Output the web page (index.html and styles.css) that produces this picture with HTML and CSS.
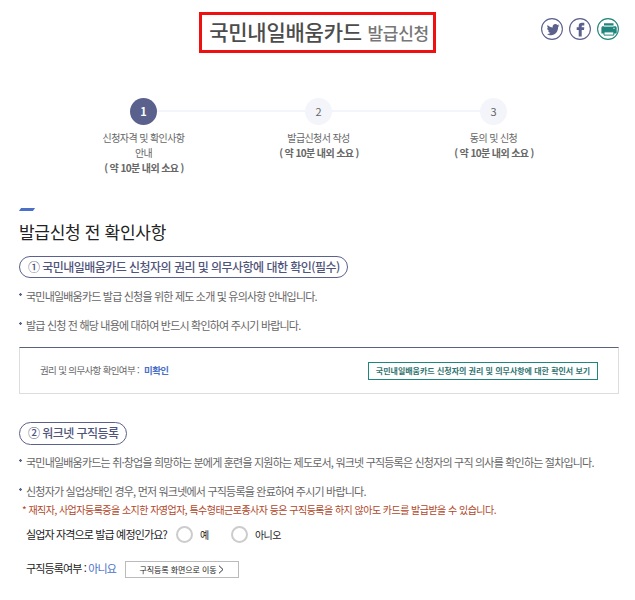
FILE: index.html
```
<!DOCTYPE html>
<html lang="ko">
<head>
    <meta charset="UTF-8">
    <meta name="viewport" content="width=device-width, initial-scale=1.0">
    <title>국민내일배움카드 발급신청</title>
    <link rel="stylesheet" href="styles.css">
</head>
<body>

    <header>
        <h1>국민내일배움카드 <small>발급신청</small></h1>
        <div class="sns">
            <a href="#" aria-label="트위터">
                <svg viewBox="0 0 22 22">
                    <circle cx="11" cy="11" r="10.4" fill="#fff" stroke="#5b618d" stroke-width="1.1"/>
                    <path fill="#5b618d" d="M6.700 7c1.200 1.500 3 2.400 5 2.500-.5-2.200 1-3.500 2.700-3.500.8 0 1.500.3 2 .9l1.700-.5-1 1.500 1.400-.3-1.400 1.500c.2 4.200-2.800 8.100-7 8.100-1.600 0-3.100-.4-4.200-1.300 1.500.1 2.700-.3 3.600-1.200-1.200 0-2-.8-2.300-1.800h1c-1.300-.5-2-1.600-2-3l1.100.4C6.100 9.400 6 8 6.700 7z"/>
                </svg>
            </a>
            <a href="#" aria-label="페이스북">
                <svg viewBox="0 0 22 22">
                    <circle cx="11" cy="11" r="10.4" fill="#fff" stroke="#5b618d" stroke-width="1.1"/>
                    <path fill="#5b618d" d="M9.700 18.500v-6.500H7.700V9.200h2V8c0-2.100 1.200-3.200 3.100-3.200h2.500v2.600h-1.500c-.8 0-1.100.3-1.100 1v.8h2.600l-.3 2.800h-2.300v6.500z"/>
                </svg>
            </a>
            <a href="#" aria-label="인쇄">
                <svg viewBox="0 0 22 22">
                    <circle cx="11" cy="11" r="10.4" fill="#fff" stroke="#20857c" stroke-width="1.1"/>
                    <path fill="#20857c" d="M7 5.300h9.500v2.500H7zM6 8.300h12c1.100 0 1.700.6 1.700 1.700v5.400H4.400V10c0-1.100.6-1.700 1.600-1.700z"/>
                    <path fill="#fff" stroke="#20857c" d="M7 13.900h9.800v3.200H7z"/>
                    <path stroke="#fff" stroke-width=".8" d="M16.200 10.300h1.600M7 8.100h9.500"/>
                </svg>
            </a>
        </div>
    </header>

    <!-- 신청 단계 -->
    <ol class="steps">
        <li class="on">
            <span class="num">1</span>
            <p>신청자격 및 확인사항<br>안내</p>
            <strong>( 약 10분 내외 소요 )</strong>
        </li>
        <li>
            <span class="num">2</span>
            <p>발급신청서 작성</p>
            <strong>( 약 10분 내외 소요 )</strong>
        </li>
        <li>
            <span class="num">3</span>
            <p>동의 및 신청</p>
            <strong>( 약 10분 내외 소요 )</strong>
        </li>
    </ol>

    <main>
        <h2>발급신청 전 확인사항</h2>

        <!-- 1. 권리 및 의무사항 -->
        <section class="rights">
            <h3>① 국민내일배움카드 신청자의 권리 및 의무사항에 대한 확인(필수)</h3>
            <ul>
                <li>국민내일배움카드 발급 신청을 위한 제도 소개 및 유의사항 안내입니다.</li>
                <li>발급 신청 전 해당 내용에 대하여 반드시 확인하여 주시기 바랍니다.</li>
            </ul>
            <div class="check-box">
                <p>권리 및 의무사항 확인여부 : <b>미확인</b></p>
                <button type="button" class="btn-view">국민내일배움카드 신청자의 권리 및 의무사항에 대한 확인서 보기</button>
            </div>
        </section>

        <!-- 2. 구직등록 -->
        <section class="worknet">
            <h3>② 워크넷 구직등록</h3>
            <ul>
                <li>국민내일배움카드는 취·창업을 희망하는 분에게 훈련을 지원하는 제도로서, 워크넷 구직등록은 신청자의 구직 의사를 확인하는 절차입니다.</li>
                <li>신청자가 실업상태인 경우, 먼저 워크넷에서 구직등록을 완료하여 주시기 바랍니다.</li>
            </ul>
            <p class="notice">* 재직자, 사업자등록증을 소지한 자영업자, 특수형태근로종사자 등은 구직등록을 하지 않아도 카드를 발급받을 수 있습니다.</p>
            <div class="row question">
                <span class="label">실업자 자격으로 발급 예정인가요?</span>
                <label><input type="radio" name="jobless">예</label>
                <label><input type="radio" name="jobless">아니오</label>
            </div>
            <div class="row status">
                <span class="label">구직등록여부 : <em>아니요</em></span>
                <button type="button" class="btn-move">구직등록 화면으로 이동
                    <svg viewBox="0 0 6 9"><path d="M1 .7l4 3.800-4 3.800" fill="none" stroke="#333"/></svg>
                </button>
            </div>
        </section>
    </main>

</body>
</html>
```
FILE: styles.css
```
* {
    box-sizing: border-box;
    margin: 0;
    padding: 0;
}
body {
    width: 635px;
    height: 600px;
    padding: 12px 16px 0 19px;
    overflow: hidden;
    background-color: #fff;
    color: #666;
    font-family: "Noto Sans CJK KR", sans-serif;
    font-size: 11px;
    letter-spacing: -0.8px;
    white-space: nowrap;
}
ul, ol {
    list-style: none;
}
button {
    font-family: inherit;
    background-color: #fff;
    white-space: nowrap;
}
header {
    display: flex;
    justify-content: space-between;
    height: 86px;
    padding-left: 180px;
}
header h1 {
    width: 237px;
    height: 41px;
    border: 3px solid #ee1111;
    padding-left: 3px;
    color: #4c4c4c;
    font-size: 21px;
    font-weight: 500;
    letter-spacing: -0.23px;
    line-height: 32px;
    text-align: center;
}
header h1 small {
    color: #777;
    font-size: 17px;
    letter-spacing: -0.3px;
}
.sns {
    display: flex;
    gap: 6px;
    padding-top: 6px;
}
.sns a, .sns svg {
    display: block;
    width: 22px;
    height: 22px;
}

/* steps */
.steps {
    display: flex;
    height: 110px;
    margin-left: 37px;
    font-size: 10px;
    letter-spacing: -0.6px;
    line-height: 15px;
    text-align: center;
}
.steps li {
    width: 175px;
    background: linear-gradient(#f3f5fb, #f3f5fb) no-repeat 0 12px / 100% 2px;
}
.steps li:first-child {
    background-size: 50% 2px;
    background-position: 100% 12px;
}
.steps li:last-child {
    background-size: 50% 2px;
}
.steps .num {
    display: block;
    width: 27px;
    height: 27px;
    margin: 0 auto 5px;
    border-radius: 50%;
    background-color: #f3f5fb;
    font-size: 11px;
    letter-spacing: 0;
    line-height: 26px;
}
.steps .on .num {
    background-color: #5b618d;
    color: #fff;
    font-weight: 700;
}
.steps strong {
    display: block;
    padding-left: 1px;
    font-weight: 700;
}

/* content */
h2 {
    color: #222;
    font-size: 17px;
    font-weight: 400;
    letter-spacing: -0.3px;
    line-height: 24px;
}
h2::before {
    content: "";
    display: block;
    width: 14px;
    height: 3px;
    margin: 0 0 9px 1px;
    background-color: #4a70c8;
    transform: skewX(-35deg);
}
h3 {
    width: 329px;
    height: 22px;
    border: 1px solid #5b618d;
    border-radius: 12px;
    padding-left: 8px;
    color: #4f547b;
    font-size: 12px;
    font-weight: 500;
    letter-spacing: -0.54px;
    line-height: 19px;
}
.rights {
    margin-top: 12px;
}
.rights ul {
    padding-top: 4px;
}
ul li {
    height: 29px;
    padding-left: 7px;
    background: radial-gradient(circle, #5b618d 1px, transparent 1.5px) no-repeat 0 11px / 3px 3px;
    line-height: 29px;
}
.check-box {
    display: flex;
    justify-content: space-between;
    align-items: center;
    height: 47px;
    margin-top: 7px;
    padding: 0 20px;
    border: 1px solid #ddd;
    border-top-color: #5b6378;
    font-size: 9.5px;
    letter-spacing: -0.65px;
}
.check-box p {
    padding-bottom: 2px;
}
.check-box b {
    margin-left: 3px;
    color: #4a70c8;
}
.btn-view {
    width: 230px;
    height: 18px;
    border: 1px solid #20857c;
    color: #2f746f;
    font-size: 8px;
    font-weight: 700;
    letter-spacing: 0;
    line-height: 14px;
}
.worknet {
    margin-top: 28px;
}
.worknet h3 {
    width: 108px;
    height: 23px;
    line-height: 20px;
}
.worknet ul {
    padding-top: 3px;
}
.notice {
    margin-top: -3px;
    padding-left: 3px;
    color: #b0472a;
    font-size: 10px;
    letter-spacing: -0.53px;
    line-height: 14px;
}
.row {
    display: flex;
    align-items: center;
    padding-left: 7px;
    color: #222;
}
.question {
    height: 20px;
    margin-top: 7px;
}
.question .label {
    width: 150px;
    letter-spacing: -0.85px;
}
.question label {
    display: flex;
    align-items: center;
    width: 55px;
    font-size: 10px;
    letter-spacing: -0.6px;
}
.question input {
    appearance: none;
    width: 17px;
    height: 17px;
    margin-right: 7px;
    border: 2px solid #ccc;
    border-radius: 50%;
}
.status {
    height: 20px;
    margin-top: 14px;
}
.status .label {
    width: 99px;
    padding-bottom: 1px;
    letter-spacing: -0.85px;
}
.status em {
    color: #4a70c8;
    font-style: normal;
}
.btn-move {
    display: flex;
    align-items: center;
    justify-content: center;
    gap: 2px;
    width: 114px;
    height: 17px;
    margin-top: 2px;
    border: 1px solid #bbb;
    color: #222;
    font-size: 8px;
    letter-spacing: -0.1px;
}
.btn-move svg {
    width: 6px;
    height: 9px;
}
```
